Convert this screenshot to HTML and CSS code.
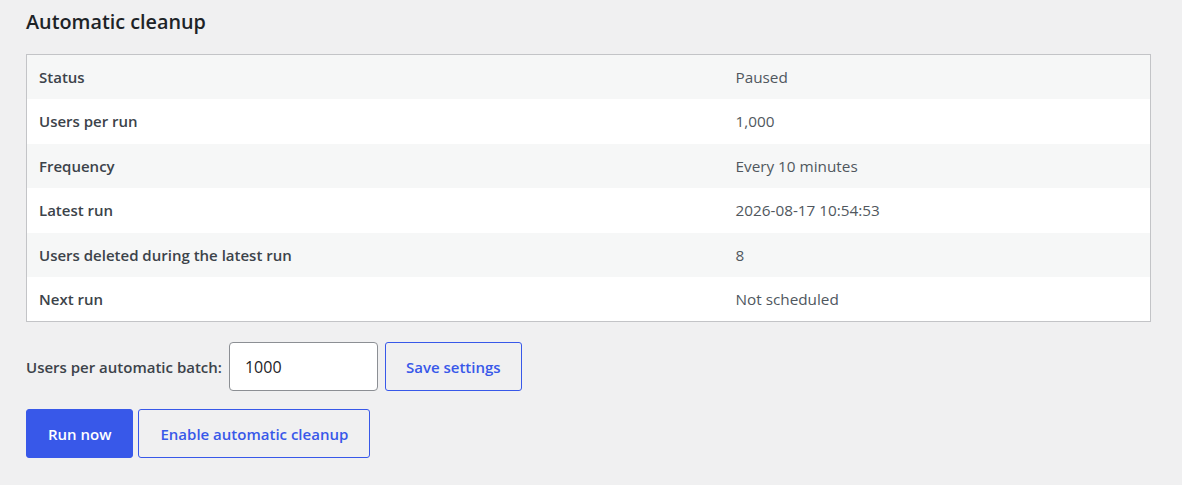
FILE: index.html
```html
<!DOCTYPE html>
<html>
<head>
<meta charset="utf-8">
<link rel="stylesheet" href="styles.css">
</head>
<body>
<div class="wrap">
  <h2 class="title">Automatic cleanup</h2>
  <table class="info">
    <tbody>
      <tr><th>Status</th><td>Paused</td></tr>
      <tr><th>Users per run</th><td>1,000</td></tr>
      <tr><th>Frequency</th><td>Every 10 minutes</td></tr>
      <tr><th>Latest run</th><td>2026-08-17 10:54:53</td></tr>
      <tr><th>Users deleted during the latest run</th><td>8</td></tr>
      <tr><th>Next run</th><td>Not scheduled</td></tr>
    </tbody>
  </table>
  <form class="settings">
    <label class="batch-label" for="batch">Users per automatic batch:</label>
    <input id="batch" class="batch-input" type="text" value="1000">
    <button type="button" class="btn btn-secondary">Save settings</button>
  </form>
  <div class="actions">
    <button type="button" class="btn btn-primary">Run now</button>
    <button type="button" class="btn btn-secondary">Enable automatic cleanup</button>
  </div>
</div>
</body>
</html>
```
FILE: styles.css
```css
html, body {
  margin: 0;
  padding: 0;
  background: #f0f0f1;
}
body {
  font-family: "Open Sans", "Noto Sans", sans-serif;
  font-size: 15px;
  color: #3c434a;
}
.wrap {
  padding: 0 31px 0 26px;
}
.title {
  margin: 0;
  padding-top: 8px;
  height: 54px;
  box-sizing: border-box;
  font-size: 19.8px;
  font-weight: 600;
  color: #1d2327;
  line-height: 28px;
}
.info {
  width: 100%;
  border-collapse: collapse;
  border: 1px solid #c3c4c7;
  background: #fff;
}
.info tr:nth-child(odd) {
  background: #f6f7f7;
}
.info th, .info td {
  height: 44.5px;
  box-sizing: border-box;
  padding: 0 12px;
  text-align: left;
  vertical-align: middle;
  line-height: 20px;
}
.info th {
  width: 697px;
  font-size: 15px;
  font-weight: 600;
  color: #3c434a;
}
.info td {
  font-size: 15.3px;
  color: #50575e;
}
.settings {
  display: flex;
  align-items: center;
  margin-top: 20px;
}
.batch-label {
  font-weight: 600;
  margin-right: 7px;
}
.batch-input {
  width: 149px;
  height: 49px;
  box-sizing: border-box;
  border: 1px solid #8c8f94;
  border-radius: 4px;
  padding: 0 15px;
  font-family: inherit;
  font-size: 16px;
  color: #1d2327;
  background: #fff;
  margin-right: 7px;
}
.btn {
  height: 49px;
  box-sizing: border-box;
  border-radius: 3px;
  padding: 0 20px;
  font-family: inherit;
  font-size: 15px;
  font-weight: 600;
  cursor: pointer;
}
.btn-secondary {
  border: 1px solid #3858e9;
  background: transparent;
  color: #3858e9;
}
.btn-primary {
  border: 1px solid #3858e9;
  background: #3858e9;
  color: #fff;
}
.actions {
  display: flex;
  gap: 5px;
  margin-top: 18px;
}
.actions .btn {
  padding: 0 21px;
}
```
